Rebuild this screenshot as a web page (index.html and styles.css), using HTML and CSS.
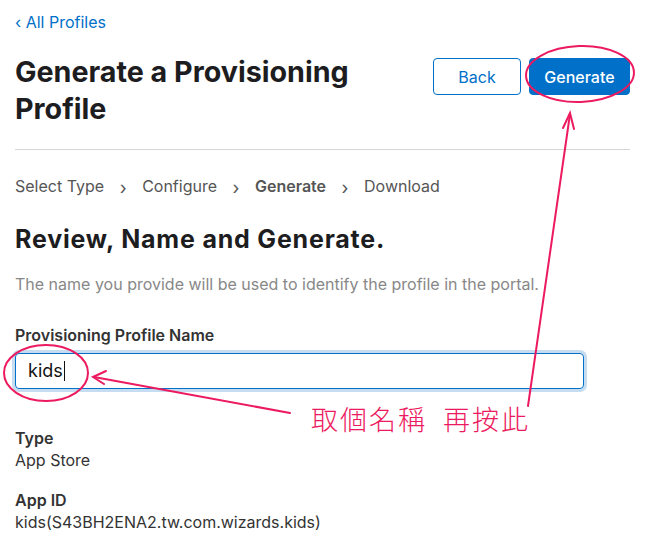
FILE: index.html
```html
<!DOCTYPE html>
<html lang="en">
<head>
  <meta charset="UTF-8">
  <title>Generate a Provisioning Profile</title>
  <link rel="stylesheet" href="styles.css">
</head>
<body>
<div class="page">
  <a class="back-link" href="#">&lsaquo; All Profiles</a>

  <div class="header">
    <h1>Generate a Provisioning Profile</h1>
    <div class="actions">
      <button class="btn btn-secondary">Back</button>
      <button class="btn btn-primary">Generate</button>
    </div>
  </div>

  <ol class="steps">
    <li>Select Type</li>
    <li class="sep">&rsaquo;</li>
    <li>Configure</li>
    <li class="sep">&rsaquo;</li>
    <li class="current">Generate</li>
    <li class="sep">&rsaquo;</li>
    <li>Download</li>
  </ol>

  <h2>Review, Name and Generate.</h2>
  <p class="hint">The name you provide will be used to identify the profile in the portal.</p>

  <label class="field-label">Provisioning Profile Name</label>
  <div class="input">kids<span class="caret"></span></div>

  <dl class="details">
    <dt>Type</dt>
    <dd>App Store</dd>
    <dt>App ID</dt>
    <dd>kids(S43BH2ENA2.tw.com.wizards.kids)</dd>
  </dl>

  <!-- hand-drawn annotation on top of the screenshot -->
  <svg class="marks" width="652" height="542" viewBox="0 0 652 542">
    <g fill="none" stroke="#ec1a5e" stroke-width="2" stroke-linecap="round">
      <ellipse cx="580" cy="74" rx="54" ry="28" transform="rotate(-2 580 74)"/>
      <ellipse cx="46" cy="373" rx="42" ry="28"/>
      <path d="M528 406 L570 114"/>
      <path d="M563 128 L570 113 L574 129"/>
      <path d="M290 413 L94 377"/>
      <path d="M106 371 L93 377 L104 384"/>
    </g>
  </svg>
  <div class="note"><span>取個名稱</span><span class="gap">再按此</span></div>
</div>
</body>
</html>
```

FILE: styles.css
```css
body {
  margin: 0;
  font-family: Inter, "Noto Sans", sans-serif;
  color: #1d1d1f;
  background: #fff;
}
.page {
  position: relative;
  width: 615px;
  height: 542px;
  padding: 0 15px;
  overflow: hidden;
}
.back-link {
  display: block;
  padding-top: 12px;
  font-size: 16px;
  line-height: 20px;
  color: #0070c9;
  text-decoration: none;
}
.header {
  display: flex;
  justify-content: space-between;
  align-items: flex-start;
  padding-top: 14px;
  padding-bottom: 22px;
  border-bottom: 1px solid #d6d6d6;
}
h1 {
  margin: 7px 0 0;
  width: 360px;
  font-size: 28.7px;
  line-height: 37px;
  font-weight: 700;
}
.actions {
  display: flex;
  gap: 8px;
  padding-top: 12px;
}
.btn {
  height: 37px;
  border-radius: 4px;
  font-family: inherit;
  font-size: 16px;
  padding: 0;
}
.btn-secondary {
  width: 88px;
  background: #fff;
  border: 1px solid #0070c9;
  color: #0070c9;
}
.btn-primary {
  width: 101px;
  background: #0070c9;
  border: 1px solid #0070c9;
  color: #fff;
  font-weight: 500;
}
.steps {
  display: flex;
  align-items: center;
  list-style: none;
  margin: 0;
  padding: 23px 0 0;
  font-size: 16px;
  line-height: 22px;
  color: #555;
}
.steps .sep {
  width: 38px;
  text-align: center;
  padding-top: 4px;
  font-size: 18px;
}
.steps .current {
  font-weight: 600;
}
h2 {
  margin: 25px 0 0;
  font-size: 25px;
  line-height: 30px;
  font-weight: 700;
  letter-spacing: 0.8px;
}
.hint {
  margin: 19px 0 0;
  font-size: 16px;
  line-height: 22px;
  color: #888;
}
.field-label {
  display: block;
  margin-top: 30px;
  font-size: 16px;
  line-height: 20px;
  font-weight: 600;
  color: #333;
}
.input {
  width: 543px;
  height: 34px;
  margin-top: 8px;
  padding: 0 12px;
  border: 1px solid #0070c9;
  border-radius: 4px;
  box-shadow: 0 0 0 3px #c6dcf0;
  font-size: 18px;
  line-height: 34px;
  color: #111;
}
.caret {
  display: inline-block;
  width: 1px;
  height: 20px;
  margin-left: 1px;
  background: #111;
  vertical-align: -4px;
}
.details {
  margin: 38px 0 0;
  font-size: 16px;
  line-height: 22px;
}
.details dt {
  font-weight: 600;
  color: #333;
}
.details dd {
  margin: 0 0 18px;
  color: #333;
}
.marks {
  position: absolute;
  left: 0;
  top: 0;
  pointer-events: none;
}
.note {
  position: absolute;
  left: 311px;
  top: 402px;
  font-family: "Noto Sans CJK TC", sans-serif;
  font-weight: 300;
  font-size: 27px;
  line-height: 34px;
  letter-spacing: 2px;
  color: #ec1a5e;
}
.note .gap {
  margin-left: 16px;
}
```
